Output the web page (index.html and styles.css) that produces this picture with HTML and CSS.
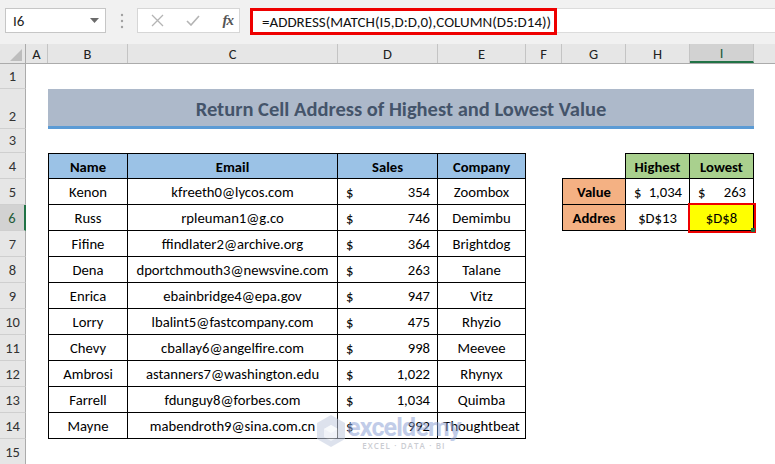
FILE: index.html
```html
<!DOCTYPE html>
<html>
<head>
<meta charset="utf-8">
<link rel="stylesheet" href="styles.css">
</head>
<body>
<div class="app">
  <div class="fbar">
    <div class="namebox"><span>I6</span>
      <svg width="9" height="5" viewBox="0 0 9 5"><polygon points="0,0 9,0 4.5,5" fill="#6b6b6b"/></svg>
    </div>
    <div class="grip">
      <svg width="4" height="16" viewBox="0 0 4 16"><circle cx="2" cy="2" r="1.2" fill="#a0a0a0"/><circle cx="2" cy="8" r="1.2" fill="#a0a0a0"/><circle cx="2" cy="14" r="1.2" fill="#a0a0a0"/></svg>
    </div>
    <div class="btns">
      <svg width="13" height="13" viewBox="0 0 13 13"><path d="M1 1L12 12M12 1L1 12" stroke="#b4b4b4" stroke-width="1.3" fill="none"/></svg>
      <svg width="14" height="11" viewBox="0 0 14 11"><path d="M1 6L5 10L13 1" stroke="#b4b4b4" stroke-width="1.6" fill="none"/></svg>
      <span class="fx">fx</span>
    </div>
    <div class="finput"><div class="formula">=ADDRESS(MATCH(I5,D:D,0),COLUMN(D5:D14))</div></div>
  </div>

  <div class="sheet">
    <div class="colhead">
      <div class="corner"><svg width="12" height="12" viewBox="0 0 12 12"><polygon points="12,0 12,12 0,12" fill="#bdbdbd"/></svg></div>
      <div class="ch w-a">A</div><div class="ch w-b">B</div><div class="ch w-c">C</div><div class="ch w-d">D</div><div class="ch w-e">E</div><div class="ch w-f">F</div><div class="ch w-g">G</div><div class="ch w-h">H</div><div class="ch w-i on">I</div><div class="ch w-j"></div>
    </div>

    <div class="row r1"><div class="rh">1</div></div>
    <div class="row r2"><div class="rh">2</div><div class="w-a"></div><div class="title">Return Cell Address of Highest and Lowest Value</div></div>
    <div class="row r3"><div class="rh">3</div></div>

    <div class="row"><div class="rh">4</div><div class="w-a"></div>
      <div class="cell w-b tb tl tt th">Name</div><div class="cell w-c tb tt th">Email</div><div class="cell w-d tb tt th">Sales</div><div class="cell w-e tb tt th">Company</div>
      <div class="w-f"></div><div class="cell w-g gcorner"></div><div class="cell w-h tb tt green">Highest</div><div class="cell w-i tb tt green">Lowest</div>
    </div>
    <div class="row"><div class="rh">5</div><div class="w-a"></div>
      <div class="cell w-b tb tl">Kenon</div><div class="cell w-c tb">kfreeth0@lycos.com</div><div class="cell w-d tb acct"><span>$</span><span>354</span></div><div class="cell w-e tb">Zoombox</div>
      <div class="w-f"></div><div class="cell w-g tb tl orange">Value</div><div class="cell w-h tb acct"><span>$</span><span>1,034</span></div><div class="cell w-i tb acct"><span>$</span><span>263</span></div>
    </div>
    <div class="row"><div class="rh on">6</div><div class="w-a"></div>
      <div class="cell w-b tb tl">Russ</div><div class="cell w-c tb">rpleuman1@g.co</div><div class="cell w-d tb acct"><span>$</span><span>746</span></div><div class="cell w-e tb">Demimbu</div>
      <div class="w-f"></div><div class="cell w-g tb tl orange">Addres</div><div class="cell w-h tb">$D$13</div><div class="cell w-i tb sel">$D$8<span class="handle"></span></div>
    </div>
    <div class="row"><div class="rh">7</div><div class="w-a"></div>
      <div class="cell w-b tb tl">Fifine</div><div class="cell w-c tb">ffindlater2@archive.org</div><div class="cell w-d tb acct"><span>$</span><span>364</span></div><div class="cell w-e tb">Brightdog</div>
    </div>
    <div class="row"><div class="rh">8</div><div class="w-a"></div>
      <div class="cell w-b tb tl">Dena</div><div class="cell w-c tb">dportchmouth3@newsvine.com</div><div class="cell w-d tb acct"><span>$</span><span>263</span></div><div class="cell w-e tb">Talane</div>
    </div>
    <div class="row"><div class="rh">9</div><div class="w-a"></div>
      <div class="cell w-b tb tl">Enrica</div><div class="cell w-c tb">ebainbridge4@epa.gov</div><div class="cell w-d tb acct"><span>$</span><span>947</span></div><div class="cell w-e tb">Vitz</div>
    </div>
    <div class="row"><div class="rh">10</div><div class="w-a"></div>
      <div class="cell w-b tb tl">Lorry</div><div class="cell w-c tb">lbalint5@fastcompany.com</div><div class="cell w-d tb acct"><span>$</span><span>475</span></div><div class="cell w-e tb">Rhyzio</div>
    </div>
    <div class="row"><div class="rh">11</div><div class="w-a"></div>
      <div class="cell w-b tb tl">Chevy</div><div class="cell w-c tb">cballay6@angelfire.com</div><div class="cell w-d tb acct"><span>$</span><span>998</span></div><div class="cell w-e tb">Meevee</div>
    </div>
    <div class="row"><div class="rh">12</div><div class="w-a"></div>
      <div class="cell w-b tb tl">Ambrosi</div><div class="cell w-c tb">astanners7@washington.edu</div><div class="cell w-d tb acct"><span>$</span><span>1,022</span></div><div class="cell w-e tb">Rhynyx</div>
    </div>
    <div class="row"><div class="rh">13</div><div class="w-a"></div>
      <div class="cell w-b tb tl">Farrell</div><div class="cell w-c tb">fdunguy8@forbes.com</div><div class="cell w-d tb acct"><span>$</span><span>1,034</span></div><div class="cell w-e tb">Quimba</div>
    </div>
    <div class="row"><div class="rh">14</div><div class="w-a"></div>
      <div class="cell w-b tb tl">Mayne</div><div class="cell w-c tb">mabendroth9@sina.com.cn</div><div class="cell w-d tb acct"><span>$</span><span>992</span></div><div class="cell w-e tb">Thoughtbeat</div>
    </div>
    <div class="row"><div class="rh">15</div></div>
  </div>

  <div class="wm">
    <svg width="30" height="34" viewBox="0 0 30 34"><polygon points="15,1 29,9 29,25 15,33 1,25 1,9" fill="#c3cce0"/><polygon points="15,11 22,15 22,23 15,27 8,23 8,15" fill="#e4e9f3"/><polygon points="15,11 22,15 15,19 8,15" fill="#f4f6fa"/></svg>
    <div class="wm-text"><div class="wm-brand">exceldemy</div><div class="wm-sub">EXCEL · DATA · BI</div></div>
  </div>
</div>
</body>
</html>
```

FILE: styles.css
```css
* { box-sizing: border-box; }
body {
  margin: 0;
  width: 775px;
  height: 464px;
  overflow: hidden;
  background: #fff;
  font-family: Carlito, Calibri, Lato, sans-serif;
  color: #000;
}
.app { position: relative; width: 775px; height: 464px; overflow: hidden; }

/* formula bar */
.fbar {
  height: 44px;
  background: #f1f1f1;
  display: flex;
  align-items: flex-start;
  padding-top: 8px;
}
.namebox {
  margin-left: 5px;
  width: 101px;
  height: 25px;
  background: #fff;
  border: 1px solid #c6c6c6;
  display: flex;
  align-items: center;
  justify-content: space-between;
  padding: 0 6px 0 7px;
  font-size: 15px;
  color: #222;
}
.grip { width: 31px; height: 25px; display: flex; align-items: center; justify-content: center; }
.btns {
  width: 103px;
  height: 25px;
  background: #fff;
  border: 1px solid #d6d6d6;
  display: flex;
  align-items: center;
  justify-content: space-between;
  padding: 0 6px 0 13px;
}
.fx {
  font-family: "Liberation Serif", serif;
  font-style: italic;
  font-weight: bold;
  font-size: 15px;
  color: #555;
  letter-spacing: -1px;
}
.finput {
  margin-left: 10px;
  flex: 1;
  height: 25px;
  background: #fff;
  border-top: 1px solid #dcdcdc;
  border-bottom: 1px solid #dcdcdc;
}
.formula {
  width: 307px;
  height: 27px;
  margin-top: -1px;
  border: 3px solid #ee0000;
  padding: 0 0 0 9px;
  display: flex;
  align-items: center;
  font-size: 15px;
  color: #111;
  white-space: nowrap;
}

/* sheet */
.colhead {
  display: flex;
  height: 20px;
  background: #e6e6e6;
  border-bottom: 1px solid #ababab;
}
.corner {
  width: 26px;
  border-right: 1px solid #ababab;
  display: flex;
  align-items: flex-end;
  justify-content: flex-end;
  padding: 0 3px 2px 0;
}
.ch {
  border-right: 1px solid #c4c4c4;
  display: flex;
  align-items: center;
  justify-content: center;
  font-size: 14.5px;
  color: #222;
}
.ch.on {
  background: #d2d2d2;
  border-bottom: 2px solid #217346;
  color: #1d5b38;
}
.ch.w-j { border-right: none; }

.w-a { width: 22px; flex: none; }
.w-b { width: 80px; flex: none; }
.w-c { width: 210px; flex: none; }
.w-d { width: 100px; flex: none; }
.w-e { width: 88px; flex: none; }
.w-f { width: 36px; flex: none; }
.w-g { width: 64px; flex: none; }
.w-h { width: 64px; flex: none; }
.w-i { width: 64px; flex: none; }
.w-j { flex: 1; }

.row { display: flex; height: 26px; }
.row.r1 { height: 25px; }
.row.r2 { height: 40px; }
.row.r3 { height: 24px; }

.rh {
  width: 26px;
  flex: none;
  background: #e6e6e6;
  border-right: 1px solid #ababab;
  border-bottom: 1px solid #cfcfcf;
  display: flex;
  align-items: flex-end;
  justify-content: center;
  padding-bottom: 3px;
  font-size: 14.5px;
  color: #333;
}
.rh.on {
  background: #d2d2d2;
  border-right: 2px solid #217346;
  color: #1d5b38;
}

.title {
  width: 706px;
  background: #adb9ca;
  border-bottom: 3px solid #5b9bd5;
  display: flex;
  align-items: center;
  justify-content: center;
  font-size: 20.5px;
  font-weight: bold;
  color: #44546a;
  padding-top: 3px;
}

.cell {
  display: flex;
  align-items: center;
  justify-content: center;
  font-size: 14.67px;
  white-space: nowrap;
  padding-top: 1px;
}
.tb { border-right: 1px solid #000; border-bottom: 1px solid #000; }
.tl { border-left: 1px solid #000; }
.tt { border-top: 1px solid #000; }
.th { background: #9bc2e6; font-weight: bold; }
.acct { justify-content: space-between; padding-left: 8px; padding-right: 7px; }
.green { background: #a9d08e; font-weight: bold; }
.orange { background: #f4b183; font-weight: bold; }
.gcorner { border-right: 1px solid #000; border-bottom: 1px solid #000; }
.sel {
  background: #ffff00;
  outline: 2px solid #ee0000;
  outline-offset: 0;
  position: relative;
}
.handle {
  position: absolute;
  right: -2px;
  bottom: -2px;
  width: 4px;
  height: 4px;
  background: #217346;
}

/* watermark */
.wm {
  position: absolute;
  left: 316px;
  top: 414px;
  display: flex;
  align-items: flex-start;
  gap: 1px;
  opacity: 0.55;
  pointer-events: none;
}
.wm-text { display: flex; flex-direction: column; align-items: center; }
.wm-brand {
  font-family: Roboto, sans-serif;
  font-weight: 700;
  font-size: 25px;
  line-height: 27px;
  letter-spacing: -0.8px;
  color: #8fa4d6;
}
.wm-sub {
  font-family: "Open Sans", sans-serif;
  font-size: 8px;
  line-height: 9px;
  letter-spacing: 1.1px;
  color: #a0a4ae;
  font-weight: 600;
}
```
